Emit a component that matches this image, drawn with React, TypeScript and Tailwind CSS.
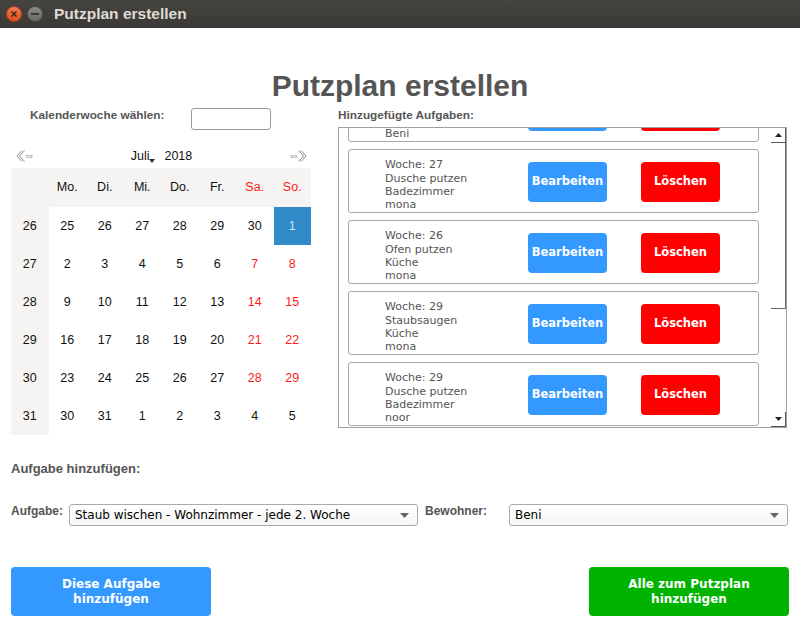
import React from 'react';

type Task = { woche: number; aufgabe: string; raum: string; wer: string };

const tasks: Task[] = [
  { woche: 26, aufgabe: 'Staubsaugen', raum: 'Küche', wer: 'Beni' },
  { woche: 27, aufgabe: 'Dusche putzen', raum: 'Badezimmer', wer: 'mona' },
  { woche: 26, aufgabe: 'Ofen putzen', raum: 'Küche', wer: 'mona' },
  { woche: 29, aufgabe: 'Staubsaugen', raum: 'Küche', wer: 'mona' },
  { woche: 29, aufgabe: 'Dusche putzen', raum: 'Badezimmer', wer: 'noor' },
];

const weeks: [number, number[]][] = [
  [26, [25, 26, 27, 28, 29, 30, 1]],
  [27, [2, 3, 4, 5, 6, 7, 8]],
  [28, [9, 10, 11, 12, 13, 14, 15]],
  [29, [16, 17, 18, 19, 20, 21, 22]],
  [30, [23, 24, 25, 26, 27, 28, 29]],
  [31, [30, 31, 1, 2, 3, 4, 5]],
];

const dayNames = ['Mo.', 'Di.', 'Mi.', 'Do.', 'Fr.', 'Sa.', 'So.'];

function NavArrow({ flip }: { flip?: boolean }) {
  return (
    <svg width="18" height="14" viewBox="0 0 18 14" className={flip ? '-scale-x-100' : ''}>
      <path d="M6 1.5 L1 7 L6 12.5" fill="none" stroke="#8a8a8a" strokeWidth="1" />
      <path d="M8.5 1.5 L3.5 7 L8.5 12.5" fill="none" stroke="#8a8a8a" strokeWidth="1" />
      <circle cx="11.5" cy="7.5" r="1.3" fill="none" stroke="#9a9a9a" strokeWidth="0.8" />
      <circle cx="15" cy="7.5" r="1.3" fill="none" stroke="#9a9a9a" strokeWidth="0.8" />
    </svg>
  );
}

function TaskCard({ task, first }: { task: Task; first?: boolean }) {
  return (
    <div
      className={`ml-[9px] w-[411px] h-[64px] shrink-0 border border-[#a9a9a9] rounded-[3px] flex items-center ${
        first ? 'mt-[-50px]' : 'mt-[7px]'
      }`}
    >
      <div className="pl-[36px] w-[179px] pt-[8px] font-['DejaVu_Sans',sans-serif] text-[11px] leading-[13.3px] text-[#555]">
        <div>Woche: {task.woche}</div>
        <div>{task.aufgabe}</div>
        <div>{task.raum}</div>
        <div>{task.wer}</div>
      </div>
      <button className="mt-[2px] w-[79px] h-[40px] rounded-[4px] bg-[#3399ff] text-white font-bold text-[11.5px] font-['DejaVu_Sans',sans-serif]">
        Bearbeiten
      </button>
      <button className="mt-[2px] ml-[34px] w-[79px] h-[40px] rounded-[4px] bg-[#ff0000] text-white font-bold text-[11.5px] font-['DejaVu_Sans',sans-serif]">
        Löschen
      </button>
    </div>
  );
}

function SelectBox({ value, width }: { value: string; width: string }) {
  return (
    <div
      className={`${width} h-[22px] border border-[#aaaaaa] rounded-[3px] bg-gradient-to-b from-white to-[#f6f6f6] flex items-center justify-between pl-[5px] pr-[8px]`}
    >
      <span className="font-['DejaVu_Sans',sans-serif] text-[12px] text-black">{value}</span>
      <svg width="9" height="5" viewBox="0 0 9 5">
        <path d="M0 0 H9 L4.5 5 Z" fill="#666" />
      </svg>
    </div>
  );
}

export default function App() {
  return (
    <div className="w-[800px] h-[626px] bg-white overflow-hidden font-['Liberation_Sans',Arial,sans-serif]">
      {/* Fensterleiste */}
      <div className="h-[28px] bg-gradient-to-b from-[#45443f] to-[#3a3935] flex items-center pl-[6px]">
        <div className="w-[16px] h-[16px] rounded-full bg-gradient-to-b from-[#f37a4f] to-[#df4a1d] border border-[#b7401b] flex items-center justify-center">
          <svg width="8" height="8" viewBox="0 0 8 8">
            <path d="M1.5 1.5 L6.5 6.5 M6.5 1.5 L1.5 6.5" stroke="#3a2a20" strokeWidth="1.5" />
          </svg>
        </div>
        <div className="ml-[5px] w-[16px] h-[16px] rounded-full bg-gradient-to-b from-[#8a8984] to-[#6b6a66] border border-[#4e4d49] flex items-center justify-center">
          <div className="w-[8px] h-[2px] bg-[#3a3935]" />
        </div>
        <span className="ml-[11px] text-[15.5px] font-bold text-[#dfdbd2]">Putzplan erstellen</span>
      </div>

      <h1 className="mt-[40px] h-[36px] leading-[36px] text-[30px] font-bold text-center text-[#555]">
        Putzplan erstellen
      </h1>

      <div className="flex mt-[4px]">
        {/* Kalender */}
        <div className="ml-[11px] w-[300px]">
          <div className="flex h-[22px]">
            <div className="w-[180px] pl-[19px] text-[11.8px] font-bold leading-[15px] text-[#555]">
              Kalenderwoche wählen:
            </div>
            <div className="w-[80px] h-[22px] border border-[#9a9a9a] rounded-[3px] bg-white" />
          </div>

          <div className="mt-[17px] h-[18px] flex items-center justify-between pl-[5px] pr-[4px]">
            <NavArrow />
            <div className="flex items-center text-[12.5px] text-[#111]">
              <span>Juli</span>
              <svg width="6" height="4" viewBox="0 0 6 4" className="mt-[9px] mr-[9px]">
                <path d="M0 0 H6 L3 4 Z" fill="#333" />
              </svg>
              <span>2018</span>
            </div>
            <NavArrow flip />
          </div>

          <div className="mt-[3px] grid grid-cols-8 text-[12.5px] text-[#111]">
            <div className="h-[39px] bg-[#f5f4f2]" />
            {dayNames.map((d, i) => (
              <div
                key={d}
                className={`h-[39px] bg-[#f5f4f2] flex items-center justify-center ${
                  i >= 5 ? 'text-[#ff1a1a]' : ''
                }`}
              >
                {d}
              </div>
            ))}
            {weeks.map(([kw, days], r) => (
              <React.Fragment key={kw}>
                <div className="h-[38px] bg-[#f5f4f2] flex items-center justify-center">{kw}</div>
                {days.map((d, i) => {
                  const selected = r === 0 && i === 6;
                  return (
                    <div
                      key={i}
                      className={`h-[38px] flex items-center justify-center ${
                        selected
                          ? 'bg-[#318bc8] text-[#cfe6fb]'
                          : i >= 5 && r > 0 && r < 5
                          ? 'text-[#ff1a1a]'
                          : ''
                      }`}
                    >
                      {d}
                    </div>
                  );
                })}
              </React.Fragment>
            ))}
          </div>
        </div>

        {/* Aufgabenliste */}
        <div className="ml-[27px] w-[449px]">
          <div className="h-[15px] text-[11.8px] font-bold leading-[15px] text-[#555]">Hinzugefügte Aufgaben:</div>
          <div className="mt-[4px] h-[301px] border border-[#a0a0a0] flex">
            <div className="flex-1 overflow-hidden flex flex-col">
              {tasks.map((t, i) => (
                <TaskCard key={i} task={t} first={i === 0} />
              ))}
            </div>
            <div className="w-[15px] flex flex-col">
              <div className="h-[15px] border-r border-b border-[#555] flex items-center justify-center">
                <svg width="7" height="4" viewBox="0 0 7 4">
                  <path d="M0 4 H7 L3.5 0 Z" fill="#222" />
                </svg>
              </div>
              <div className="h-[166px] border-r border-b border-[#666]" />
              <div className="flex-1" />
              <div className="h-[15px] border-r border-b border-[#555] flex items-center justify-center">
                <svg width="7" height="4" viewBox="0 0 7 4">
                  <path d="M0 0 H7 L3.5 4 Z" fill="#222" />
                </svg>
              </div>
            </div>
          </div>
        </div>
      </div>

      {/* Aufgabe hinzufügen */}
      <div className="mt-[26px] ml-[11px] h-[16px] leading-[16px] text-[13px] font-bold text-[#555]">
        Aufgabe hinzufügen:
      </div>

      <div className="mt-[27px] px-[11px] flex h-[22px]">
        <div className="w-[58px] text-[12px] font-bold leading-[15px] text-[#555]">Aufgabe:</div>
        <SelectBox value="Staub wischen - Wohnzimmer - jede 2. Woche" width="w-[349px]" />
        <div className="ml-[7px] w-[84px] text-[12px] font-bold leading-[15px] text-[#555]">Bewohner:</div>
        <SelectBox value="Beni" width="w-[279px]" />
      </div>

      <div className="mt-[41px] px-[11px] flex justify-between">
        <button className="w-[200px] h-[49px] rounded-[4px] bg-[#3399ff] text-white font-bold text-[12px] leading-[15px] font-['DejaVu_Sans',sans-serif]">
          Diese Aufgabe
          <br />
          hinzufügen
        </button>
        <button className="w-[200px] h-[49px] rounded-[4px] bg-[#00b300] text-white font-bold text-[12px] leading-[15px] font-['DejaVu_Sans',sans-serif]">
          Alle zum Putzplan
          <br />
          hinzufügen
        </button>
      </div>
    </div>
  );
}
